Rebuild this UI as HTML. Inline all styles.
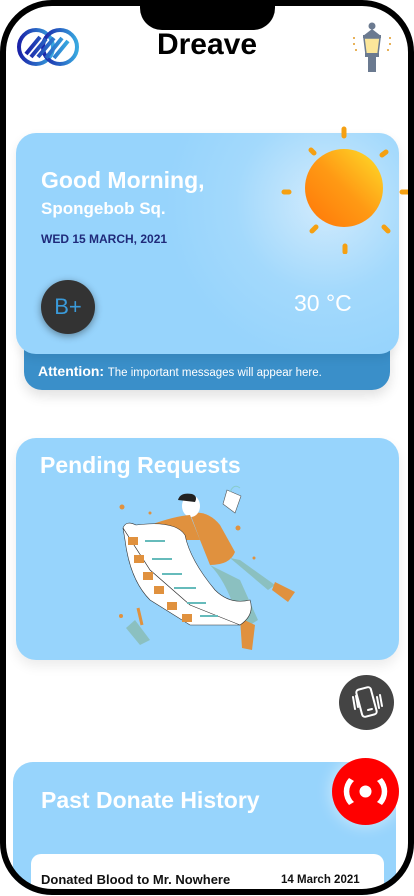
<!DOCTYPE html>
<html><head><meta charset="utf-8"><style>
*{margin:0;padding:0;box-sizing:border-box}
body{width:414px;height:896px;background:#fff;position:relative;overflow:hidden;font-family:"Liberation Sans",Roboto,sans-serif}
.clip{position:absolute;left:0;top:0;width:414px;height:895px;border-radius:52px;overflow:hidden}
.frame{position:absolute;left:0;top:0;width:414px;height:895px;border:6px solid #000;border-radius:52px;z-index:50;pointer-events:none}
.notch{position:absolute;left:140px;top:0;width:135px;height:30px;background:#000;border-radius:0 0 22px 22px;z-index:51}
.abs{position:absolute}
.card{position:absolute;background:#97d4fc;border-radius:20px}
</style></head><body>
<div class="clip">
<svg class="abs" style="left:16px;top:26px" width="64" height="42" viewBox="0 0 64 42">
<defs><linearGradient id="lg" x1="0" x2="1"><stop offset="0" stop-color="#1a22a8"/><stop offset="1" stop-color="#38a8e0"/></linearGradient></defs>
<g fill="none" stroke="url(#lg)" stroke-width="4">
<circle cx="20" cy="21" r="17"/><circle cx="44" cy="21" r="17"/>
<path d="M10 28L24 11M15 31L30 13M22 31L38 12M30 32L46 12M38 32L52 15"/>
</g></svg>
<div class="abs" style="left:0;width:414px;top:28px;text-align:center;font-size:30px;font-weight:bold;color:#000">Dreave</div>
<svg class="abs" style="left:350px;top:22px" width="44" height="52" viewBox="0 0 44 52">
<circle cx="22" cy="4" r="3.5" fill="#6b7a90"/>
<path d="M13 14L22 7L31 14Z" fill="#6b7a90"/>
<rect x="13" y="13" width="18" height="3" fill="#6b7a90"/>
<path d="M14 16H30L28 32H16Z" fill="#fbe69a" stroke="#6b7a90" stroke-width="1.5"/>
<rect x="15" y="31" width="14" height="4" fill="#6b7a90"/>
<rect x="18" y="35" width="8" height="15" fill="#6b7a90"/>
<g fill="#e8b25a"><rect x="3" y="15" width="2" height="2"/><rect x="3" y="21" width="2" height="2"/><rect x="5" y="27" width="2" height="2"/><rect x="39" y="15" width="2" height="2"/><rect x="39" y="21" width="2" height="2"/><rect x="37" y="27" width="2" height="2"/></g>
</svg>
<div class="abs" style="left:24px;top:340px;width:366px;height:50px;background:#3a8fc9;border-radius:0 0 18px 18px;box-shadow:0 6px 12px rgba(0,0,0,.12)"></div>
<div class="abs" style="left:38px;top:363px;font-size:13px;color:#fff;white-space:nowrap"><b style="font-size:14px">Attention:</b> <span style="font-size:11.5px">The important messages will appear here.</span></div>
<div class="card" style="left:16px;top:133px;width:383px;height:221px;background:radial-gradient(circle at 310px 70px,#d2ebfd 0,#a3d9fc 90px,#97d4fc 160px);box-shadow:0 4px 10px rgba(0,0,0,.08)"></div>
<div class="abs" style="left:41px;top:167px;font-size:23px;font-weight:bold;color:#fff">Good Morning,</div>
<div class="abs" style="left:41px;top:199px;font-size:17px;font-weight:bold;color:#fff">Spongebob Sq.</div>
<div class="abs" style="left:41px;top:232px;font-size:12px;font-weight:bold;color:#1f2a7a">WED 15 MARCH, 2021</div>
<div class="abs" style="left:41px;top:280px;width:54px;height:54px;border-radius:50%;background:#333;box-shadow:0 2px 8px rgba(0,0,0,.4);color:#3a9ad9;font-size:22px;line-height:54px;text-align:center">B+</div>
<div class="abs" style="left:294px;top:290px;font-size:23px;color:#fff">30 °C</div>
<svg class="abs" style="left:278px;top:124px" width="136" height="130" viewBox="0 0 136 130">
<defs><linearGradient id="sg" x1="1" y1="0" x2="0" y2="1"><stop offset="0" stop-color="#fde02a"/><stop offset=".5" stop-color="#ff9a14"/><stop offset="1" stop-color="#ff7508"/></linearGradient></defs>
<circle cx="66" cy="64" r="39" fill="url(#sg)"/>
<g stroke="#f5a012" stroke-width="5" stroke-linecap="round">
<path d="M66 5V12M33 26L36 29M108 28L104 31M6 68H11M124 68H130M34 107L38 103M106 103L110 107M67 122V128"/></g>
</svg>
<div class="card" style="left:16px;top:438px;width:383px;height:222px;box-shadow:0 6px 12px rgba(0,0,0,.08)"></div>
<div class="abs" style="left:40px;top:452px;font-size:23px;font-weight:bold;color:#fff">Pending Requests</div>
<svg class="abs" style="left:90px;top:480px" width="220" height="180" viewBox="0 0 220 180">
<path d="M133 24L137 10L151 16L145 33Z" fill="#fff" stroke="#555" stroke-width=".6"/>
<path d="M140 12Q144 3 150 8" fill="none" stroke="#8cc" stroke-width="1"/>
<path d="M100 33Q118 30 130 45L145 72Q140 85 120 85L110 60Z" fill="#e0913e"/>
<path d="M140 78L178 110L185 105L150 80Z" fill="#8bc0c0"/>
<path d="M120 85Q135 100 145 130L160 145L168 140L150 100Z" fill="#8bc0c0"/>
<path d="M185 102L205 112L198 122L182 110Z" fill="#e0913e"/>
<path d="M150 138L165 145L162 170L152 168Z" fill="#e0913e"/>
<ellipse cx="101" cy="26" rx="9" ry="11" fill="#fff"/>
<path d="M88 20Q90 12 102 14Q108 16 105 22Z" fill="#222"/>
<path d="M60 45Q85 36 100 35L110 60L75 60Z" fill="#e0913e"/>
<path d="M33 48Q36 40 46 45Q85 40 95 55Q100 80 125 110Q140 125 160 120Q165 135 150 145Q120 140 100 125L60 90Z" fill="#fff" stroke="#333" stroke-width=".6"/>
<path d="M33 48L35 60Q40 100 60 120L100 145L150 145L100 125L60 90Z" fill="#fff" stroke="#333" stroke-width=".6"/>
<g fill="#e0913e"><rect x="38" y="57" width="10" height="8"/><rect x="44" y="75" width="10" height="8"/><rect x="53" y="92" width="10" height="8"/><rect x="64" y="106" width="10" height="8"/><rect x="77" y="122" width="10" height="8"/><rect x="92" y="134" width="10" height="8"/></g>
<g stroke="#6bb" stroke-width="2"><path d="M55 61H75M62 79H82M72 94H92M84 108H106M97 123H116M110 136H128"/></g>
<path d="M45 140L60 160L50 165L36 148Z" fill="#8bc0c0"/>
<path d="M48 128L52 145" stroke="#e0913e" stroke-width="3"/>
<g fill="#e0913e"><circle cx="32" cy="27" r="2.5"/><circle cx="60" cy="33" r="1.5"/><circle cx="148" cy="48" r="2.5"/><circle cx="164" cy="78" r="1.5"/><circle cx="31" cy="136" r="2"/></g>
</svg>
<div class="abs" style="left:339px;top:675px;width:55px;height:55px;border-radius:50%;background:#444"></div>
<svg class="abs" style="left:339px;top:675px" width="55" height="55" viewBox="0 0 55 55" fill="none" stroke="#fff" stroke-width="2" stroke-linecap="round">
<rect x="20" y="13" width="15" height="28" rx="3" transform="rotate(-15 27.5 27)"/>
<path d="M29 35L33 34"/><path d="M14 22L16 34M17 21L19 32M41 20L43 31M38 22L40 33"/>
</svg>
<div class="card" style="left:13px;top:762px;width:383px;height:160px;border-radius:20px"></div>
<div class="abs" style="left:41px;top:787px;font-size:23px;font-weight:bold;color:#fff">Past Donate History</div>
<div class="abs" style="left:332px;top:758px;width:67px;height:67px;border-radius:50%;background:#f00;box-shadow:0 0 16px rgba(255,255,255,.6)"></div>
<svg class="abs" style="left:332px;top:758px" width="67" height="67" viewBox="0 0 67 67">
<circle cx="33.5" cy="33.5" r="6" fill="#fff"/>
<path d="M17 20A20 20 0 0 0 17 47L22 44A14 14 0 0 1 22 23Z" fill="#fff"/>
<path d="M50 20A20 20 0 0 1 50 47L45 44A14 14 0 0 0 45 23Z" fill="#fff"/>
</svg>
<div class="abs" style="left:31px;top:854px;width:353px;height:60px;background:#fff;border-radius:10px"></div>
<div class="abs" style="left:41px;top:872px;font-size:13px;font-weight:bold;color:#111">Donated Blood to Mr. Nowhere</div>
<div class="abs" style="left:281px;top:874px;font-size:11.5px;font-weight:bold;color:#111">14 March 2021</div>
</div>
<div class="frame"></div>
<div class="notch"></div>
</body></html>
